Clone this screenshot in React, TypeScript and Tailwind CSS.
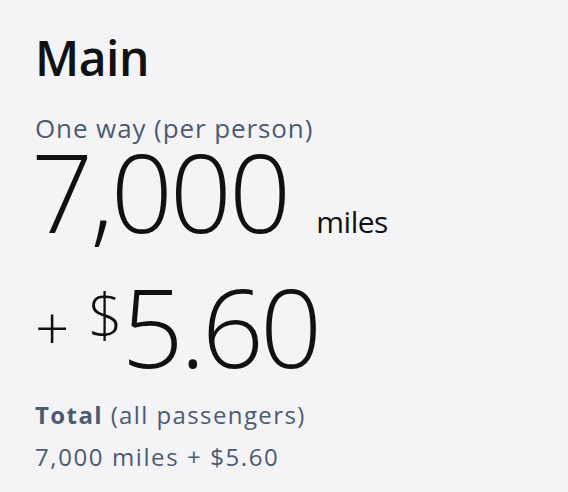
export default function App() {
  return (
    <div className="min-h-[492px] w-full bg-[#f4f4f6] px-[35px] pt-[30px] text-[#111111]" style={{ fontFamily: '"Open Sans", "Noto Sans", sans-serif' }}>
      <h1 className="text-[48px] font-semibold leading-[56px] tracking-[-0.5px]">Main</h1>
      <div className="mt-[26px] text-[26px] leading-[32px] tracking-[0.9px] text-[#4b5b72]">One way (per person)</div>
      <div className="mt-[2px] flex items-baseline leading-[90px]">
        <span className="-ml-[4px] text-[109px] font-light tracking-[-3px]">7,000</span>
        <span className="ml-[28px] text-[30px] leading-none tracking-[-0.5px]">miles</span>
      </div>
      <div className="mt-[34px] flex items-start leading-none">
        <span className="mt-[26px] text-[60px] font-light">+</span>
        <span className="mt-[14px] ml-[19px] text-[60px] font-light">$</span>
        <span className="-ml-[1px] text-[109px] font-light tracking-[-4px]">5.60</span>
      </div>
      <div className="mt-[14px] text-[24px] leading-[42px] tracking-[1.4px] text-[#4b5b72]">
        <span className="font-bold">Total</span> (all passengers)
      </div>
      <div className="text-[24px] leading-[42px] tracking-[1.6px] text-[#4b5b72]">7,000 miles + $5.60</div>
    </div>
  )
}
